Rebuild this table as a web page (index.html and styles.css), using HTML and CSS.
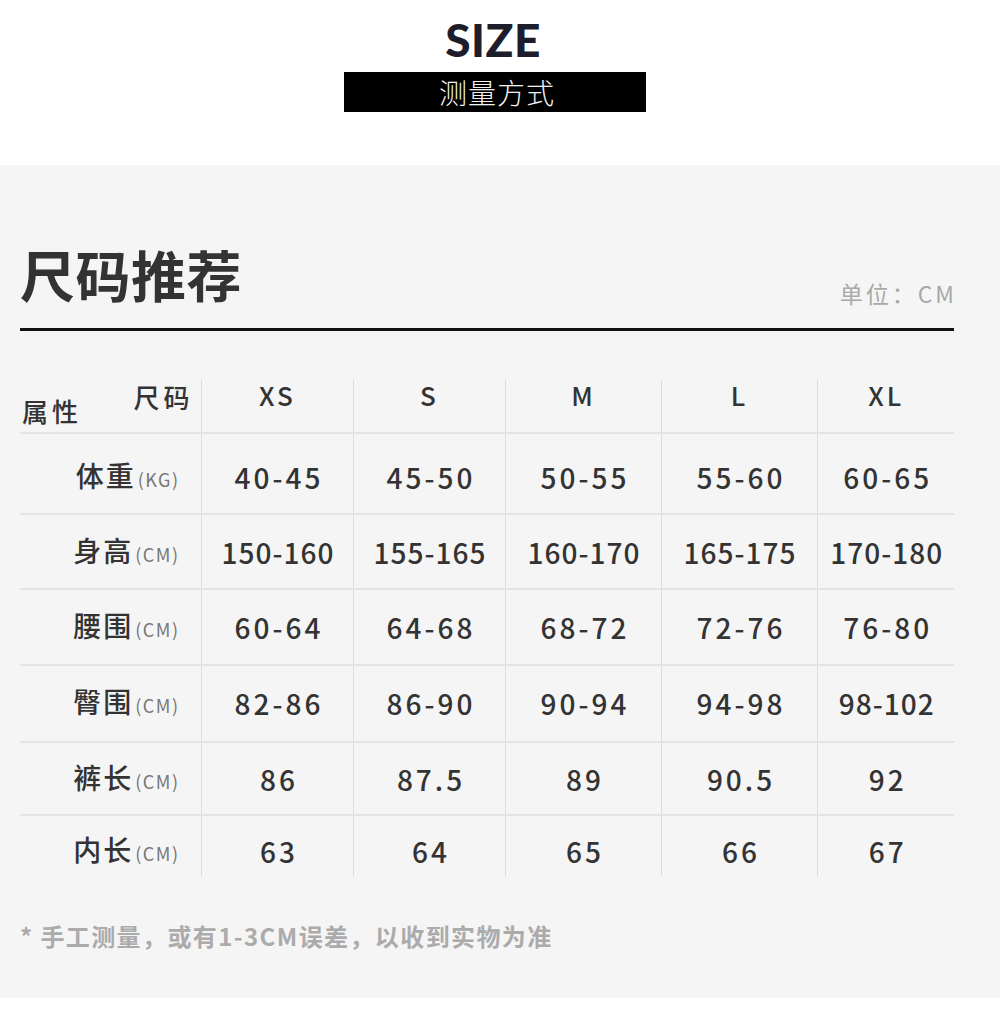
FILE: index.html
```html
<!DOCTYPE html>
<html lang="zh-CN">
<head>
<meta charset="utf-8">
<title>SIZE 尺码推荐</title>
<link rel="stylesheet" href="styles.css">
</head>
<body>
<header class="top">
  <div class="size-title">SIZE</div>
  <div class="size-bar">测量方式</div>
</header>
<section class="panel">
  <div class="head">
    <h1 class="title">尺码推荐</h1>
    <div class="unit">单位：CM</div>
  </div>
  <table class="chart">
    <colgroup>
      <col class="c0"><col class="c1"><col class="c2"><col class="c3"><col class="c4"><col class="c5">
    </colgroup>
    <thead>
      <tr class="hrow">
        <th class="corner"><span class="attr">属性</span><span class="sz">尺码</span></th>
        <th>XS</th><th>S</th><th>M</th><th>L</th><th>XL</th>
      </tr>
    </thead>
    <tbody>
      <tr class="r1"><td class="label">体重<small>(KG)</small></td><td>40-45</td><td>45-50</td><td>50-55</td><td>55-60</td><td>60-65</td></tr>
      <tr class="r2"><td class="label">身高<small>(CM)</small></td><td class="tight">150-160</td><td class="tight">155-165</td><td class="tight">160-170</td><td class="tight">165-175</td><td class="tight">170-180</td></tr>
      <tr class="r3"><td class="label">腰围<small>(CM)</small></td><td>60-64</td><td>64-68</td><td>68-72</td><td>72-76</td><td>76-80</td></tr>
      <tr class="r4"><td class="label">臀围<small>(CM)</small></td><td>82-86</td><td>86-90</td><td>90-94</td><td>94-98</td><td class="tight">98-102</td></tr>
      <tr class="r5"><td class="label">裤长<small>(CM)</small></td><td>86</td><td>87.5</td><td>89</td><td>90.5</td><td>92</td></tr>
      <tr class="r6"><td class="label">内长<small>(CM)</small></td><td>63</td><td>64</td><td>65</td><td>66</td><td>67</td></tr>
    </tbody>
  </table>
  <p class="note">* 手工测量，或有1-3CM误差，以收到实物为准</p>
</section>
</body>
</html>
```
FILE: styles.css
```css
html, body {
  margin: 0;
  padding: 0;
  background: #ffffff;
}
body {
  width: 1000px;
  height: 1013px;
  overflow: hidden;
  font-family: "Noto Sans CJK SC", "Noto Sans", sans-serif;
  color: #333333;
}
.top {
  height: 165px;
  box-sizing: border-box;
  padding-right: 10px;
  display: flex;
  flex-direction: column;
  align-items: center;
  background: #ffffff;
}
.size-title {
  margin-top: 17px;
  margin-right: 4px;
  font-family: Lato, "Open Sans", sans-serif;
  font-weight: 900;
  font-size: 46px;
  line-height: 46px;
  color: #1d1d2b;
  letter-spacing: 0.5px;
}
.size-bar {
  margin-top: 9px;
  width: 302px;
  height: 40px;
  background: #000000;
  color: #f2f2f2;
  font-size: 28px;
  font-weight: 300;
  line-height: 40px;
  letter-spacing: 1px;
  text-indent: 4px;
  text-align: center;
}
.panel {
  background: #f5f5f5;
  height: 833px;
  box-sizing: border-box;
  padding: 0 46px 0 20px;
  overflow: hidden;
}
.head {
  display: flex;
  justify-content: space-between;
  align-items: flex-start;
  padding-top: 75px;
  height: 166px;
  box-sizing: border-box;
  border-bottom: 3px solid #111111;
}
.title {
  margin: 0;
  font-size: 55px;
  font-weight: 700;
  line-height: 66px;
  color: #333333;
  letter-spacing: 0.5px;
}
.unit {
  margin-top: 38px;
  font-size: 23px;
  line-height: 30px;
  color: #a9a9a9;
  letter-spacing: 3px;
  margin-right: -3px;
}
.chart {
  margin-top: 49px;
  width: 934px;
  border-collapse: collapse;
  table-layout: fixed;
}
.c0 { width: 181px; }
.c1 { width: 152px; }
.c2 { width: 152px; }
.c3 { width: 156px; }
.c4 { width: 156px; }
.c5 { width: 137px; }
.chart th, .chart td {
  padding: 0;
  text-align: center;
  border-left: 1px solid #dcdcdc;
}
.chart th:first-child, .chart td:first-child {
  border-left: none;
}
.chart tbody tr {
  border-top: 2px solid #e4e4e4;
}
.hrow { height: 52px; }
.hrow th {
  vertical-align: top;
  padding-top: 1px;
  padding-left: 1px;
  font-size: 26px;
  font-weight: 500;
  line-height: 28px;
  letter-spacing: 3px;
  color: #333333;
}
.corner {
  display: flex;
  justify-content: space-between;
  align-items: flex-start;
  height: 52px;
  box-sizing: border-box;
}
.chart th.corner {
  padding: 0;
  font-weight: 500;
  letter-spacing: 4px;
}
.attr {
  padding-top: 17px;
  padding-left: 2px;
}
.sz {
  padding-top: 3px;
  padding-right: 7px;
}
.chart td {
  vertical-align: middle;
  padding-left: 4px;
  font-size: 28px;
  font-weight: 500;
  line-height: 34px;
  letter-spacing: 3px;
  color: #333333;
}
.chart td.tight {
  letter-spacing: 1px;
  padding-left: 2px;
}
.chart td.label {
  text-align: right;
  padding-left: 0;
  padding-right: 21px;
  letter-spacing: 2px;
}
.label small {
  font-size: 18px;
  font-weight: 400;
  color: #777777;
  letter-spacing: 1.5px;
  margin-left: 2px;
}
.r1 { height: 81px; }
.r1 td { padding-top: 6px; }
.r2 { height: 75px; }
.r2 td { padding-top: 1px; }
.r3 { height: 76px; }
.r4 { height: 77px; }
.r4 td { padding-bottom: 1px; }
.r5 { height: 73px; }
.r5 td { padding-top: 1px; }
.r6 { height: 61px; }
.r6 td { padding-top: 9px; }
.note {
  margin: 45px 0 0 0;
  font-size: 24px;
  font-weight: 700;
  line-height: 30px;
  color: #ababab;
  letter-spacing: 1.4px;
}
```
